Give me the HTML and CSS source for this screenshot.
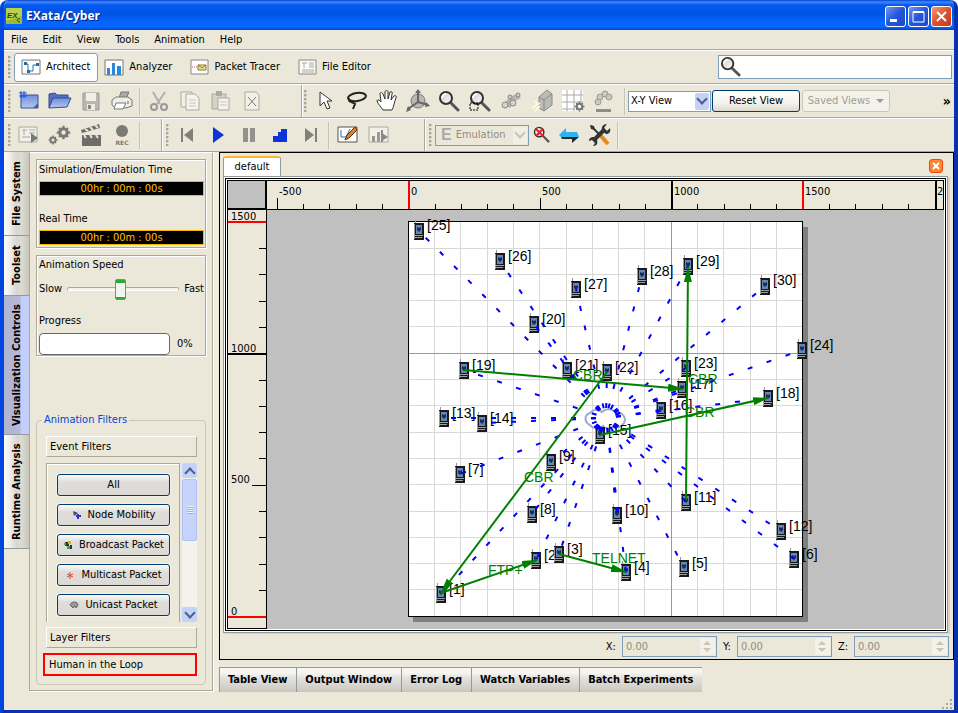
FILE: index.html
```html
<!DOCTYPE html>
<html lang="en">
<head>
<meta charset="utf-8">
<title>EXata/Cyber</title>
<link rel="stylesheet" href="styles.css">
</head>
<body>
<svg class="defs" width="0" height="0" aria-hidden="true">
  <defs>
    <linearGradient id="lens" x1="0" y1="0" x2="1" y2="1"><stop offset="0" stop-color="#c8c8c8"/><stop offset="1" stop-color="#fff"/></linearGradient>
    <linearGradient id="folder" x1="0" y1="0" x2="0" y2="1"><stop offset="0" stop-color="#6f8fd8"/><stop offset="1" stop-color="#b4c6f2"/></linearGradient>
    <symbol id="gear" viewBox="-10 -10 20 20"><circle r="5" fill="none" stroke="#7b7a75" stroke-width="4"/><path d="M0-9V-5M0 9V5M-9 0H-5M9 0H5M-6-6l3 3M6 6l-3-3M-6 6l3-3M6-6l-3 3" stroke="#7b7a75" stroke-width="3"/></symbol>
    <symbol id="magnifier" viewBox="0 0 22 22"><path d="M13 13l7 7" stroke="#555" stroke-width="3" stroke-linecap="round"/><circle cx="8" cy="8" r="6" fill="url(#lens)" stroke="#333" stroke-width="2"/><path d="M4 8c0-2 2-4 4-4" stroke="#fff" fill="none" stroke-width="2"/></symbol>
    <symbol id="phone" viewBox="0 0 10 20"><path d="M1 0h1v5H1z" fill="#999"/><path d="M0 3h10v17H0z" fill="#17191d"/><path d="M0 4h1v15H0z" fill="#9a9a9a"/><path d="M2 5h6v9H2z" fill="#6687b5"/><path d="M3 7l2 1 2-1v3l-2 2-2-2z" fill="#1c2c58"/><path d="M1 15h8v1H1zM1 17h7v1H1z" fill="#a0a09a"/></symbol>
    <marker id="arrow" viewBox="0 0 16 8" refX="15" refY="4" markerWidth="16" markerHeight="8" markerUnits="userSpaceOnUse" orient="auto"><path d="M0 0l16 4L0 8z" fill="#008000"/></marker>
  </defs>
</svg>
<div class="window">
  <header class="titlebar">
    <svg class="app-icon" width="16" height="16" viewBox="0 0 16 16"><path d="M0 0h16v16H0z" fill="#9dba32"/><path d="M0 0h16v8L0 13z" fill="#b9d04e"/><text x="1" y="10" class="app-mark">EX</text><path d="M14 11c-3-1-4 3 0 3" fill="none" stroke="#35401a"/></svg>
    <h1>EXata/Cyber</h1>
    <div class="window-buttons">
      <button class="wb" aria-label="Minimize"><svg width="19" height="19"><path d="M4 12h7v3H4z" fill="#fff"/></svg></button>
      <button class="wb" aria-label="Maximize"><svg width="19" height="19"><path d="M4 5h11v10H4z" fill="none" stroke="#fff"/><path d="M4 4h11v2H4z" fill="#fff"/></svg></button>
      <button class="wb wb-close" aria-label="Close"><svg width="19" height="19"><path d="M5 5l9 9M14 5l-9 9" stroke="#fff" stroke-width="2"/></svg></button>
    </div>
  </header>
  <nav class="menu"><button>File</button><button>Edit</button><button>View</button><button>Tools</button><button>Animation</button><button>Help</button></nav>

  <div class="bar modes">
    <span class="grip"></span>
    <button class="mode active"><svg width="21" height="17"><path d="M1 1h18v14H1z" fill="#fff" stroke="#777"/><path d="M4 5h3v7h5V6h5" fill="none" stroke="#2474b8"/><path d="M3 3h3v3H3zM6 11h3v3H6zM15 4h3v3h-3z" fill="#1f6cae"/></svg>Architect</button>
    <button class="mode"><svg width="21" height="17"><path d="M1 1h18v15H1z" fill="#fff" stroke="#777"/><path d="M3 9h3v7H3zM8 4h3v12H8zM13 7h4v9h-4z" fill="#2f86d6"/></svg>Analyzer</button>
    <button class="mode"><svg width="20" height="17"><path d="M1 1h17v14H1z" fill="#fff" stroke="#888"/><path d="M2 8h5" stroke="#c66" stroke-dasharray="1 1"/><path d="M8 6h8v5H8z" fill="#f0e48a" stroke="#887b2c"/><path d="M8 6l4 3 4-3" fill="none" stroke="#887b2c"/></svg>Packet Tracer</button>
    <button class="mode"><svg width="20" height="17"><path d="M1 1h17v14H1z" fill="#fafaf6" stroke="#888"/><path d="M4 4h5M6 4v5M11 4h5M11 6h5M11 8h5M4 11h12M4 13h12" stroke="#aaa" fill="none"/></svg>File Editor</button>
    <label class="search"><svg width="22" height="22"><use href="#magnifier" x="1" y="0" width="21" height="21"/></svg><input type="text" aria-label="Search"></label>
  </div>

  <div class="bar">
    <section class="group file-group">
      <span class="grip"></span>
      <button class="tool" aria-label="New"><svg width="22" height="22"><path d="M3 5h17v13H3z" fill="url(#folder)" stroke="#3c508c"/><path d="M15 18l5-5v5z" fill="#455da5"/><path d="M3 1v7M6 1v7M1 3h8M1 6h8" stroke="#1448ff"/></svg></button>
      <button class="tool" aria-label="Open"><svg width="24" height="22"><path d="M1 18V4l6-1 2 2h11v4" fill="#5170bd" stroke="#344c91"/><path d="M1 18l4-10h18l-4 9z" fill="url(#folder)" stroke="#344c91"/></svg></button>
      <button class="tool" aria-label="Save"><svg width="22" height="22"><path d="M3 3h16v17H3z" fill="#b9b8b0" stroke="#999"/><path d="M6 3h10v8H6z" fill="#f1f0e8"/><path d="M7 14h8v6H7z" fill="#ecebe1"/><path d="M8 15h3v4H8z" fill="#888"/></svg></button>
      <button class="tool" aria-label="Print"><svg width="22" height="22"><path d="M8 8l2-6h8l-3 7z" fill="#aaa" stroke="#777"/><path d="M1 10l4-3h12l4 3v6l-6 2H4l-3-3z" fill="#eeeeea" stroke="#777"/><path d="M5 13h10l-3 6H3z" fill="#fff" stroke="#777"/><path d="M17 11v3" stroke="#d33"/></svg></button>
      <span class="sep"></span>
      <button class="tool" disabled aria-label="Cut"><svg width="22" height="22"><path d="M5 2l7 12M17 2L9 14" stroke="#b3b1a7" stroke-width="2"/><circle cx="6" cy="17" r="3" fill="none" stroke="#999" stroke-width="2"/><circle cx="16" cy="17" r="3" fill="none" stroke="#999" stroke-width="2"/></svg></button>
      <button class="tool" disabled aria-label="Copy"><svg width="22" height="22"><path d="M2 2h11v15H2z" fill="#f2f1e8" stroke="#aaa99f"/><path d="M7 4h9l4 4v12H7z" fill="#f5f4ec" stroke="#aaa99f"/><path d="M10 10h7M10 13h7M10 16h7" stroke="#c6c5bc"/></svg></button>
      <button class="tool" disabled aria-label="Paste"><svg width="22" height="22"><path d="M2 4h14v15H2z" fill="#d5d3c6" stroke="#aaa99f"/><path d="M6 1h6v5H6z" fill="#aaa"/><path d="M8 8h11v12H8z" fill="#f5f4ec" stroke="#aaa99f"/><path d="M10 12h7M10 15h7" stroke="#c6c5bc"/></svg></button>
      <button class="tool" disabled aria-label="Delete"><svg width="22" height="22"><path d="M4 2h11l3 3v15H4z" fill="#f2f1e8" stroke="#aaa99f"/><path d="M7 7l8 9M15 7l-8 9" stroke="#777" stroke-width="1"/></svg></button>
    </section>
    <section class="group view-group">
      <span class="grip"></span>
      <button class="tool" aria-label="Select"><svg width="22" height="22"><path d="M6 2v14l4-4 3 7 3-1-3-7h5z" fill="#fff" stroke="#333"/></svg></button>
      <button class="tool" aria-label="Lasso"><svg width="22" height="22"><ellipse cx="12" cy="7" rx="9" ry="4" fill="none" stroke="#222" stroke-width="2" transform="rotate(-8 12 7)"/><path d="M5 9c-4 3 6 4 5 5l-2 5" fill="none" stroke="#222" stroke-width="2"/></svg></button>
      <button class="tool" aria-label="Pan"><svg width="22" height="22"><path d="M7 20C5 17 2 14 1 11c0-2 3-1 4 1L4 4c0-2 2-2 3 0l2 5V2c0-2 3-2 3 0v7l2-7c1-1 3 0 2 2l-1 6 3-4c1-1 3 0 2 2-2 4-2 9-4 12z" fill="#fff" stroke="#333"/></svg></button>
      <button class="tool" aria-label="Rotate 3D"><svg width="24" height="24"><circle cx="12" cy="12" r="7" fill="#b9b8b1" stroke="#777"/><path d="M12 13V2M12 13l10 3M12 13L2 20" stroke="#666" stroke-width="2" fill="none"/><path d="M9 4l3-4 3 4zM20 13l4 4-5 1zM5 21l-5 2 2-6z" fill="#666"/></svg></button>
      <button class="tool" aria-label="Zoom"><svg width="22" height="22"><use href="#magnifier" width="22" height="22"/></svg></button>
      <button class="tool" aria-label="Zoom area"><svg width="22" height="22"><use href="#magnifier" width="22" height="22"/><path d="M1 13h8v7H1z" fill="none" stroke="#000" stroke-dasharray="2 1"/></svg></button>
      <button class="tool" aria-label="Find"><svg width="22" height="22"><path d="M3 14l7-7 8-4 3 5-6 3-5 7z" fill="#b5b4ad"/><circle cx="5" cy="15" r="3" fill="#d5d4cc" stroke="#888"/><circle cx="13" cy="13" r="3" fill="#d5d4cc" stroke="#888"/><circle cx="10" cy="7" r="2" fill="#ccc" stroke="#888"/><circle cx="18" cy="5" r="2" fill="#ccc" stroke="#888"/></svg></button>
      <button class="tool" aria-label="Camera"><svg width="22" height="24"><path d="M8 8l8-7 5 4v11l-8 6-5-3z" fill="#bdbcb4" stroke="#888"/><path d="M8 8l5 3v11M13 11l8-6" fill="none" stroke="#888"/><path d="M1 19l8-5M3 12l5 3M4 22l5-5" stroke="#fff9dc" stroke-width="2"/></svg></button>
      <button class="tool" aria-label="Grid"><svg width="24" height="24"><path d="M1 1h21v21H1z" fill="#fff"/><path d="M6 1v21M13 1v21M20 1v12M1 6h21M1 13h21M1 20h13" stroke="#aaa"/><use href="#gear" x="13" y="12" width="11" height="11"/></svg></button>
      <button class="tool" aria-label="Smooth path"><svg width="22" height="24"><path d="M3 20h15v3H3z" fill="#8e8e88"/><g fill="#cac9c0" stroke="#999"><circle cx="5" cy="13" r="3"/><circle cx="7" cy="8" r="3"/><circle cx="12" cy="5" r="3"/><circle cx="16" cy="8" r="3"/></g></svg></button>
      <span class="sep"></span>
      <span class="combo view-combo"><select aria-label="View plane"><option>X-Y View</option></select><i class="chev"></i></span>
      <button class="push reset">Reset View</button>
      <button class="push saved" disabled>Saved Views<i class="tri"></i></button>
      <button class="more" aria-label="More">»</button>
    </section>
  </div>

  <div class="bar">
    <section class="group run-group">
      <span class="grip"></span>
      <button class="tool" aria-label="Script"><svg width="22" height="20"><path d="M1 2h18v15H1z" fill="#f2f1e8" stroke="#aaa99f"/><path d="M4 5h5M6 5v5M11 5h6M11 8h6M4 12h8" stroke="#aaa" fill="none"/><path d="M13 8l7 5-7 5z" fill="#777"/></svg></button>
      <button class="tool" aria-label="Settings"><svg width="24" height="22"><use href="#gear" x="8" y="1" width="15" height="15"/><use href="#gear" x="0" y="11" width="10" height="10"/></svg></button>
      <button class="tool" aria-label="Movie"><svg width="22" height="24"><path d="M2 12h19v11H2z" fill="#6e6d69"/><path d="M1 7l18-6 1 4L2 10z" fill="#6e6d69"/><path d="M5 6l3 2M10 4l3 3M15 2l3 3M4 12l2 3M10 12l2 3M16 12l2 3" stroke="#e8e6da" stroke-width="2"/></svg></button>
      <button class="tool" aria-label="Record"><svg width="22" height="24"><circle cx="11" cy="8" r="6" fill="#7b7a75"/><text x="11" y="22" text-anchor="middle" class="rec">REC</text></svg></button>
      <span class="sep"></span>
    </section>
    <section class="group play-group">
      <span class="grip"></span>
      <button class="tool" aria-label="First"><svg width="22" height="20"><path d="M5 3h2v14H5zM17 3v14L8 10z" fill="#807f7a"/></svg></button>
      <button class="tool" aria-label="Play"><svg width="22" height="20"><path d="M6 2l11 8-11 8z" fill="#0b35d8"/></svg></button>
      <button class="tool" aria-label="Pause"><svg width="22" height="20"><path d="M5 3h5v14H5zM12 3h5v14h-5z" fill="#92918b"/></svg></button>
      <button class="tool" aria-label="Step"><svg width="22" height="20"><path d="M4 17v-6h5V7h3V4h6v13z" fill="#0b35d8"/></svg></button>
      <button class="tool" aria-label="Last"><svg width="22" height="20"><path d="M5 3l9 7-9 7zM15 3h2v14h-2z" fill="#807f7a"/></svg></button>
      <span class="sep"></span>
      <button class="tool" aria-label="Edit scenario"><svg width="22" height="20"><path d="M1 2h19v15H1z" fill="#fff" stroke="#555"/><path d="M4 5v7h5l4-8" stroke="#2474b8" fill="none"/><path d="M8 15l2-5 8-8 2 3-8 8z" fill="#e08020" stroke="#553311"/></svg></button>
      <button class="tool" aria-label="Run analysis"><svg width="22" height="20"><path d="M1 2h19v15H1z" fill="#f2f1e8" stroke="#aaa99f"/><path d="M4 11h3v6H4zM9 7h3v10H9z" fill="#999"/><path d="M13 5h2v12h-2zM14 8l6 4-6 4z" fill="#888"/></svg></button>
    </section>
    <section class="group emu-group">
      <span class="grip"></span>
      <span class="combo emu-combo off"><b>E</b><select disabled aria-label="Mode"><option>Emulation</option></select><i class="chev"></i></span>
      <button class="tool slim" aria-label="Clear zoom"><svg width="18" height="20"><use href="#magnifier" x="1" y="1" width="17" height="17"/><path d="M4 4l7 7M11 4l-7 7" stroke="#e0202a" stroke-width="2"/></svg></button>
      <button class="tool" aria-label="Connect"><svg width="22" height="20"><path d="M3 12h18l-7 6v-4H4z" fill="#222b33"/><path d="M1 10l7-7v4h11l2 5H3z" fill="#2cb4ec"/></svg></button>
      <button class="tool" aria-label="Tools"><svg width="24" height="24"><path d="M3 3l10 10" stroke="#333" stroke-width="2"/><path d="M2 2l4 1 1 4-4-1z" fill="#333"/><path d="M13 13l7 8" stroke="#e58a1c" stroke-width="4"/><path d="M6 17L17 6" stroke="#333" stroke-width="4"/><path d="M22 5l-3 3-3-3 3-4c-4 0-6 3-5 7l4 3c3 0 5-2 4-6zM1 18l3-1 3 3-2 3c4 0 5-3 4-6l-3-3c-3 0-5 1-5 4z" fill="#333"/></svg></button>
      <span class="sep"></span>
    </section>
  </div>

  <main class="main">
    <nav class="side-tabs"><button class="t1">File System</button><button class="t2">Toolset</button><button class="t3 on">Visualization Controls</button><button class="t4">Runtime Analysis</button></nav>
    <aside class="panel">
      <section class="box times">
        <span>Simulation/Emulation Time</span><output>00hr : 00m : 00s</output>
        <span>Real Time</span><output>00hr : 00m : 00s</output>
      </section>
      <section class="box speed">
        <label for="speed">Animation Speed</label>
        <div class="slider"><span>Slow</span><input id="speed" type="range" min="0" max="100" value="47"><span>Fast</span></div>
        <label for="prog">Progress</label>
        <div class="progress"><progress id="prog" max="100" value="0"></progress><span>0%</span></div>
      </section>
      <fieldset class="filters">
        <legend>Animation Filters</legend>
        <button class="fold">Event Filters</button>
        <div class="events">
          <div class="event-list">
            <button class="push">All</button>
            <button class="push"><svg width="10" height="10"><path d="M1 1l5 2-4 3z" fill="#447"/><path d="M6 4v5M4 6h5" stroke="#33b" stroke-width="2"/></svg>Node Mobility</button>
            <button class="push"><svg width="10" height="10"><path d="M2 2h4v4H2z" fill="#333"/><path d="M5 1h3v3H5z" fill="#e0b020"/><path d="M4 6h3v3H4z" fill="#3a4"/><path d="M1 3h2v2H1z" fill="#5a5"/><path d="M7 5h2v4H7z" fill="#235"/></svg>Broadcast Packet</button>
            <button class="push"><svg width="10" height="10"><path d="M5 2v7M2 4l6 3M8 4L2 7" stroke="#cf4a32"/></svg>Multicast Packet</button>
            <button class="push"><svg width="10" height="10"><path d="M1 5c1-4 8-4 8 0L7 8 6 6 4 8z" fill="#999" stroke="#666"/></svg>Unicast Packet</button>
          </div>
          <div class="scroll"><button aria-label="Scroll up"><i class="chev up"></i></button><span class="thumb"></span><button aria-label="Scroll down"><i class="chev"></i></button></div>
        </div>
        <button class="fold">Layer Filters</button>
        <button class="fold marked">Human in the Loop</button>
      </fieldset>
    </aside>

    <div class="work">
      <section class="editor">
        <div class="doc-tabs"><button class="doc">default</button><button class="doc-close" aria-label="Close tab"><svg width="12" height="12"><path d="M3 3l6 6M9 3l-6 6" stroke="#fff" stroke-width="2"/></svg></button></div>
        <div class="frame"><div class="map">
          <div class="corner"></div>
          <svg class="ruler-x"><g transform="translate(-267 -181)">
            <path class="tick" d="M277 198v12M303 204v6M329 204v6M356 204v6M382 204v6M435 204v6M461 204v6M487 204v6M513 204v6M540 198v12M566 204v6M592 204v6M619 204v6M645 204v6M697 204v6M724 204v6M750 204v6M776 204v6M829 204v6M855 204v6M882 204v6M908 204v6"/>
            <path class="major" d="M672 181v29M936 181v29"/><path class="limit" d="M409 181v29M803 181v29"/>
            <text x="279" y="195">-500</text><text x="411" y="195">0</text><text x="542" y="195">500</text><text x="674" y="195">1000</text><text x="805" y="195">1500</text><text x="937" y="195">2</text>
          </g></svg>
          <svg class="ruler-y"><g transform="translate(-228 -210)">
            <path class="tick" d="M259 248h7M259 274h7M259 301h7M259 327h7M259 380h7M259 406h7M259 432h7M259 458h7M252 485h14M259 511h7M259 537h7M259 564h7M259 590h7"/>
            <path class="major" d="M228 354h38"/><path class="limit" d="M228 222h38M228 617h38"/>
            <text x="231" y="220">1500</text><text x="231" y="352">1000</text><text x="231" y="483">500</text><text x="231" y="615">0</text>
          </g></svg>
          <svg class="canvas" role="img" aria-label="Network scenario"><g transform="translate(-267 -210)">
            <path d="M413 227h395v395H413z" fill="#808080"/><path d="M408 221h395v396H408z" fill="#000"/><path d="M409 222h393v394H409z" fill="#fff"/>
            <path class="grid" d="M434 222v394M460 222v394M487 222v394M513 222v394M539 222v394M566 222v394M592 222v394M618 222v394M644 222v394M697 222v394M723 222v394M750 222v394M776 222v394M409 248h393M409 274h393M409 300h393M409 326h393M409 379h393M409 405h393M409 432h393M409 458h393M409 484h393M409 511h393M409 537h393M409 563h393M409 589h393"/>
            <path class="grid-major" d="M671 222v394M409 353h393"/>
            <path class="cloud" d="M590 425c-6-3-6-10 0-12 3-4 9-4 12-1 4-4 11-3 13 0 7-1 12 6 9 11-2 4-7 5-10 3-3 4-9 3-11 0-4 3-10 3-13-1z"/>
            <g class="nodes">
              <g transform="translate(419 232)"><use href="#phone" x="-5" y="-12" width="10" height="20"/><text x="8" y="-2">[25]</text></g>
              <g transform="translate(500 262)"><use href="#phone" x="-5" y="-12" width="10" height="20"/><text x="8" y="-1">[26]</text></g>
              <g transform="translate(576 290)"><use href="#phone" x="-5" y="-12" width="10" height="20"/><text x="8" y="-1">[27]</text></g>
              <g transform="translate(642 277)"><use href="#phone" x="-5" y="-12" width="10" height="20"/><text x="8" y="-1">[28]</text></g>
              <g transform="translate(688 267)"><use href="#phone" x="-5" y="-12" width="10" height="20"/><text x="8" y="-1">[29]</text></g>
              <g transform="translate(765 287)"><use href="#phone" x="-5" y="-12" width="10" height="20"/><text x="8" y="-2">[30]</text></g>
              <g transform="translate(534 325)"><use href="#phone" x="-5" y="-12" width="10" height="20"/><text x="8" y="-1">[20]</text></g>
              <g transform="translate(802 351)"><use href="#phone" x="-5" y="-12" width="10" height="20"/><text x="8" y="-1">[24]</text></g>
              <g transform="translate(464 371)"><use href="#phone" x="-5" y="-12" width="10" height="20"/><text x="8" y="-1">[19]</text></g>
              <g transform="translate(567 371)"><use href="#phone" x="-5" y="-12" width="10" height="20"/><text x="8" y="-1">[21]</text></g>
              <g transform="translate(607 373)"><use href="#phone" x="-5" y="-12" width="10" height="20"/><text x="8" y="-1">[22]</text></g>
              <g transform="translate(686 369)"><use href="#phone" x="-5" y="-12" width="10" height="20"/><text x="8" y="-1">[23]</text></g>
              <g transform="translate(682 390)"><use href="#phone" x="-5" y="-12" width="10" height="20"/><text x="8" y="-1">[17]</text></g>
              <g transform="translate(768 399)"><use href="#phone" x="-5" y="-12" width="10" height="20"/><text x="8" y="-1">[18]</text></g>
              <g transform="translate(661 411)"><use href="#phone" x="-5" y="-12" width="10" height="20"/><text x="8" y="-1">[16]</text></g>
              <g transform="translate(444 419)"><use href="#phone" x="-5" y="-12" width="10" height="20"/><text x="8" y="-1">[13]</text></g>
              <g transform="translate(482 424)"><use href="#phone" x="-5" y="-12" width="10" height="20"/><text x="8" y="-1">[14]</text></g>
              <g transform="translate(600 436)"><use href="#phone" x="-5" y="-12" width="10" height="20"/><text x="8" y="-1">[15]</text></g>
              <g transform="translate(460 475)"><use href="#phone" x="-5" y="-12" width="10" height="20"/><text x="8" y="-1">[7]</text></g>
              <g transform="translate(551 463)"><use href="#phone" x="-5" y="-12" width="10" height="20"/><text x="8" y="-2">[9]</text></g>
              <g transform="translate(686 503)"><use href="#phone" x="-5" y="-12" width="10" height="20"/><text x="8" y="-1">[11]</text></g>
              <g transform="translate(532 515)"><use href="#phone" x="-5" y="-12" width="10" height="20"/><text x="8" y="-1">[8]</text></g>
              <g transform="translate(617 516)"><use href="#phone" x="-5" y="-12" width="10" height="20"/><text x="8" y="-1">[10]</text></g>
              <g transform="translate(781 532)"><use href="#phone" x="-5" y="-12" width="10" height="20"/><text x="8" y="-1">[12]</text></g>
              <g transform="translate(536 561)"><use href="#phone" x="-5" y="-12" width="10" height="20"/><text x="8" y="-1">[2]</text></g>
              <g transform="translate(559 555)"><use href="#phone" x="-5" y="-12" width="10" height="20"/><text x="8" y="-1">[3]</text></g>
              <g transform="translate(626 573)"><use href="#phone" x="-5" y="-12" width="10" height="20"/><text x="8" y="-1">[4]</text></g>
              <g transform="translate(684 569)"><use href="#phone" x="-5" y="-12" width="10" height="20"/><text x="8" y="-1">[5]</text></g>
              <g transform="translate(794 560)"><use href="#phone" x="-5" y="-12" width="10" height="20"/><text x="8" y="-1">[6]</text></g>
              <g transform="translate(441 595)"><use href="#phone" x="-5" y="-12" width="10" height="20"/><text x="8" y="-1">[1]</text></g>
            </g>
            <g class="links">
              <path d="M606 418L419 231"/><path d="M606 418L500 261"/><path d="M606 418L576 289"/><path d="M606 418L642 276"/><path d="M606 418L688 266"/><path d="M606 418L765 286"/><path d="M606 418L534 324"/><path d="M606 418L802 350"/><path d="M606 418L464 370"/><path d="M606 418L567 370"/><path d="M606 418L607 372"/><path d="M606 418L686 368"/><path d="M606 418L682 389"/><path d="M606 418L768 398"/><path d="M606 418L661 410"/><path d="M606 418L444 418"/><path d="M606 418L482 423"/><path d="M606 418L600 435"/><path d="M606 418L460 474"/><path d="M606 418L551 462"/><path d="M606 418L686 502"/><path d="M606 418L532 514"/><path d="M606 418L617 515"/><path d="M606 418L781 531"/><path d="M606 418L536 560"/><path d="M606 418L559 554"/><path d="M606 418L626 572"/><path d="M606 418L684 568"/><path d="M606 418L794 559"/><path d="M606 418L441 594"/>
            </g>
            <g class="flows">
              <path d="M441 593L537 560"/><path d="M607 372L441 593"/><path d="M464 370L683 389"/><path d="M600 435L768 398"/><path d="M686 500L688 267"/><path d="M559 554L626 572"/>
              <text x="573" y="380">CBR</text><text x="688" y="384">CBR</text><text x="685" y="417">CBR</text><text x="524" y="482">CBR</text><text x="488" y="575">FTP+</text><text x="592" y="563">TELNET</text>
            </g>
          </g></svg>
        </div></div>
        <div class="coords">
          <label for="cx">X:</label><span class="spin"><input id="cx" type="text" value="0.00" disabled><i class="steps"></i></span>
          <label for="cy">Y:</label><span class="spin"><input id="cy" type="text" value="0.00" disabled><i class="steps"></i></span>
          <label for="cz">Z:</label><span class="spin"><input id="cz" type="text" value="0.00" disabled><i class="steps"></i></span>
        </div>
      </section>
      <nav class="bottom-tabs"><button>Table View</button><button>Output Window</button><button>Error Log</button><button>Watch Variables</button><button>Batch Experiments</button></nav>
      <svg class="sizer" width="12" height="12"><path d="M9 1h2v2H9zM5 5h2v2H5zM9 5h2v2H9zM1 9h2v2H1zM5 9h2v2H5zM9 9h2v2H9z" fill="#aca899"/></svg>
    </div>
  </main>
</div>
</body>
</html>
```
FILE: styles.css
```css
* { box-sizing: border-box; }
html, body { margin: 0; height: 100%; }
body { background: #fff; color: #000; font: 11px/14px "DejaVu Sans Condensed", "DejaVu Sans", sans-serif; }
button, input, select { font: inherit; color: inherit; margin: 0; padding: 0; border: 0; background: none; border-radius: 0; white-space: nowrap; }
svg { display: block; flex: none; }
.defs { position: absolute; }

.window { min-height: 100vh; display: flex; flex-direction: column; background: #ebe8d9; border: solid #0045e0; border-width: 0 4px 4px; border-right-color: #0831b0; border-bottom-color: #0831b0; border-radius: 8px 8px 0 0; overflow: hidden; }
.titlebar { height: 30px; display: flex; align-items: center; gap: 4px; margin: 0 -4px; padding: 2px 6px 0; background: linear-gradient(#0a3fcf 0, #3a8bff 2px, #0558ee 5px, #0054e3 14px, #0566ff 22px, #0566ff 27px, #0040c8 30px); }
.titlebar h1 { margin: 0; color: #fff; font: bold 12px/18px "Open Sans", sans-serif; text-shadow: 1px 1px 1px #0a1883; }
.app-mark { font: italic bold 8px "Liberation Sans", sans-serif; fill: #35401a; }
.window-buttons { margin-left: auto; display: flex; gap: 2px; }
.wb { width: 21px; height: 21px; border: 1px solid #fff; border-radius: 3px; background: linear-gradient(135deg, #7295ec, #2456dc 50%, #1c49c8); }
.wb-close { background: linear-gradient(135deg, #f09a80, #e0502c 50%, #c43a14); }

.menu { height: 20px; display: flex; align-items: center; gap: 15px; padding: 0 7px; border-bottom: 1px solid #aca899; }
.bar { height: 34px; display: flex; border-top: 1px solid #fff; border-bottom: 1px solid #aca899; }
.modes { align-items: center; }
.group { display: flex; align-items: center; }
.group + .group { border-left: 1px solid #aca899; box-shadow: inset 1px 0 #fff; }
.grip { flex: none; width: 3px; height: 22px; margin: 0 2px 0 4px; background: radial-gradient(circle at 1px 1px, #a9a697 1px, transparent 2px) 0 0 / 3px 4px; }
.sep { width: 2px; height: 27px; margin: 0 2px; border-left: 1px solid #c5c2b0; background: #f3f1e6; }
.tool { width: 31px; height: 28px; display: grid; place-items: center; flex: none; }
.slim { width: 24px; }
.mode { height: 29px; display: flex; align-items: center; gap: 4px; margin-left: 1px; padding: 0 12px 0 5px; }
.mode.active { padding: 0 7px 0 6px; background: #fff; border: 1px solid #7f9db9; border-radius: 3px; }
.search { margin-left: auto; margin-right: 2px; width: 234px; height: 24px; display: flex; background: #fff; border: 1px solid #7f9db9; }
.search input { flex: 1; min-width: 0; }
.file-group { flex: 0 0 297px; }
.view-group { flex: 1; }
.view-group .grip { margin-left: 2px; }
.view-group .sep { margin-left: 5px; }
.run-group { flex: 0 0 157px; }
.play-group { flex: 0 0 263px; }

.combo { display: flex; align-items: center; height: 21px; padding: 1px; background: #fff; border: 1px solid #7f9db9; }
.combo select { flex: 1; min-width: 0; appearance: none; }
.combo select:disabled { color: #8f8d80; opacity: 1; }
.combo .chev { width: 14px; height: 17px; }
.combo b { color: #aaa; font: bold 16px/16px "Liberation Sans", sans-serif; margin: 0 4px; }
.view-combo { width: 83px; }
.view-combo select { margin-left: 1px; }
.emu-combo { width: 94px; margin-left: 1px; background: #ebe8d9; }
.chev { display: grid; place-items: center; flex: none; background: #c3d1fb; border-radius: 2px; }
.chev::after { content: ""; width: 6px; height: 6px; border: solid #4d6185; border-width: 0 2px 2px 0; transform: translateY(-2px) rotate(45deg); }
.chev.up::after { transform: translateY(2px) rotate(225deg); }
.off .chev { background: #f2f0e6; }
.off .chev::after { border-color: #c8c5b5; }
.push { height: 22px; display: flex; align-items: center; justify-content: center; gap: 6px; border: 1px solid #003c74; border-radius: 3px; background: linear-gradient(#fff, #f4f3ec 60%, #dcd9cd); }
.reset { width: 88px; margin-left: 1px; }
.saved { width: 88px; margin-left: 2px; border-color: #c9c7ba; background: #f3f2ea; color: #a09e90; }
.tri { border: 4px solid transparent; border-top-color: #a09e90; border-bottom: 0; }
.more { margin-left: auto; margin-right: 3px; font-weight: bold; font-size: 14px; }
.rec { font: bold 6px "DejaVu Sans", sans-serif; fill: #7b7a75; }

.main { flex: 1; display: flex; min-height: 0; }
.side-tabs { width: 25px; display: flex; flex-direction: column; }
.side-tabs button { width: 25px; writing-mode: vertical-rl; transform: rotate(180deg); font-weight: bold; border-top: 1px solid #919b9c; background: linear-gradient(90deg, #c9c7ba, #dddbd0 30%, #d9d6d6 50%, #f2f1ec 80%, #fbfbf7); }
.t1 { height: 84px; } .t2 { height: 60px; } .t3 { height: 139px; } .t4 { height: 114px; }
.side-tabs .on { background: linear-gradient(90deg, #c3cffa 30%, #b5b9dc 35%, #b0b4cf); }

.panel { flex: none; width: 184px; margin-bottom: 19px; padding: 6px 6px 5px; display: flex; flex-direction: column; border: 1px solid #aca899; border-top-color: #fff; box-shadow: 1px 0 #fff, 1px 1px #fff, 5px 0 #f0eee3; }
.box { display: flex; flex-direction: column; border: 1px solid #aca899; box-shadow: 1px 1px #fff, inset 1px 1px #fff; padding: 2px 1px 2px 2px; }
.times { height: 89px; padding-top: 3px; }
.times output { height: 15px; line-height: 13px; border: 1px solid #f5b800; background: #000; color: #ffc000; text-align: center; margin: 4px 0 16px; }
.times output:last-child { margin-bottom: 0; }
.speed { height: 101px; margin-top: 7px; }
.slider { display: flex; align-items: center; height: 24px; margin: 6px 0 14px; gap: 5px; }
.slider input { flex: 1; min-width: 0; height: 22px; appearance: none; }
.slider input::-webkit-slider-runnable-track { height: 4px; border: 1px solid #aaa99e; border-bottom-color: #fff; border-radius: 2px; background: #f4f3ea; }
.slider input::-webkit-slider-thumb { appearance: none; width: 11px; height: 21px; margin-top: -9px; border: 1px solid #778899; border-radius: 2px; background: linear-gradient(#21b12a 3px, #f3f3ef 3px 17px, #21b12a 17px); }
.progress { display: flex; align-items: center; gap: 7px; margin-top: 5px; }
.progress progress { appearance: none; width: 131px; height: 22px; border: 1px solid #686868; border-radius: 4px; background: #fff; }
.progress progress::-webkit-progress-bar { background: transparent; }
.progress progress::-webkit-progress-value { background: #21b12a; }

.filters { margin: 57px 0 0; padding: 9px 8px 8px 9px; min-width: 0; border: 1px solid #c9c6b5; border-radius: 4px; display: flex; flex-direction: column; }
.filters legend { margin-left: -4px; padding: 0 2px; color: #0046d5; }
.fold { height: 21px; padding: 0 3px; text-align: left; border: 1px solid; border-color: #fff #aca899 #aca899 #fff; }
.marked { height: 23px; margin: 5px 0 0 -3px; padding: 0 4px; border: 2px solid #f00; }
.events { display: flex; height: 159px; margin: 6px 0 5px; gap: 2px; overflow: hidden; }
.event-list { flex: 1; display: flex; flex-direction: column; gap: 8px; padding: 10px 9px 0 10px; border: 1px solid #aca899; border-bottom: 0; box-shadow: inset 1px 1px #fff; }
.event-list .push { flex: none; background: linear-gradient(#fbfbf8, #deddd9 35%, #dbdad6); box-shadow: 0 0 0 1px #f3f2ea; }
.scroll { width: 15px; display: flex; flex-direction: column; background: #f3f2ee; }
.scroll .chev, .scroll button { width: 15px; height: 15px; border-radius: 2px; }
.thumb { height: 62px; margin: 1px 0 auto; border: 1px solid #b0c2f6; border-radius: 2px; background: repeating-linear-gradient(#eef4fe 0 1px, #8cb0f8 1px 2px) center / 6px 8px no-repeat #c6d3fb; }

.work { flex: 1; min-width: 0; position: relative; display: flex; flex-direction: column; padding-left: 6px; }
.editor { flex: 1; min-height: 0; display: flex; flex-direction: column; border: 1px solid #000; }
.doc-tabs { height: 23px; display: flex; justify-content: space-between; align-items: flex-end; padding: 0 10px 0 3px; }
.doc { height: 20px; width: 58px; border: 1px solid #919b9c; border-width: 2px 1px 0; border-top-color: #ffb62c; border-radius: 3px 3px 0 0; background: #fff; }
.doc-close { width: 14px; height: 14px; margin-bottom: 3px; border: 1px solid #f14b14; border-radius: 3px; background: #ff8434; }
.frame { flex: 1; min-height: 0; display: flex; margin: 0 5px 3px 3px; border: 1px solid #919b9c; padding: 1px; background: #fff; box-shadow: 2px 1px #d8d5c8; }
.map { flex: 1; min-width: 0; display: grid; grid-template: 30px 1fr / 40px 1fr; border: 1px solid #000; padding: 1px; }
.map > * { width: 100%; height: 100%; min-width: 0; min-height: 0; overflow: hidden; }
.corner { background: #c0c0c0; border: solid #000; border-width: 1px 2px 2px 1px; }
.ruler-x { border: solid #000; border-width: 1px 1px 1px 0; background: #ebe8d9; }
.ruler-y { border: solid #000; border-width: 0 1px 1px; background: #ebe8d9; }
.canvas { background: #c0c0c0; }
.map path { shape-rendering: crispEdges; }
.tick { stroke: #000; }
.major { stroke: #000; stroke-width: 2px; }
.limit { stroke: #f00; stroke-width: 2px; }
.map .grid { stroke: #d8d8d4; }
.grid-major { stroke: #999; }
.map .cloud { fill: #fff; stroke: #9fa9cc; stroke-width: 2px; shape-rendering: auto; }
.nodes text, .flows text { font: 14px "Liberation Sans", sans-serif; }
.links path { stroke: #00f; stroke-width: 2px; stroke-dasharray: 5 15; stroke-dashoffset: -10; shape-rendering: auto; }
.flows path { stroke: #008000; stroke-width: 2px; marker-end: url(#arrow); shape-rendering: auto; }
.flows text { fill: #008000; }

.coords { height: 23px; display: flex; align-items: flex-start; justify-content: flex-end; padding-right: 4px; }
.coords label { line-height: 21px; margin: 0 6px; }
.spin { width: 95px; height: 21px; display: flex; border: 1px solid #7f9db9; padding: 1px; }
.spin input { flex: 1; min-width: 0; padding-left: 2px; color: #8f8d80; }
.steps { width: 15px; display: flex; flex-direction: column; justify-content: center; align-items: center; gap: 3px; background: #f3f1e8; }
.steps::before, .steps::after { content: ""; border: 4px solid transparent; border-top: 0; border-bottom-color: #c8c5b5; }
.steps::after { border-top: 4px solid #c8c5b5; border-bottom: 0; }
.bottom-tabs { display: flex; margin: 7px 0 18px; }
.bottom-tabs button { height: 25px; padding: 0 9px 0 8px; font-weight: bold; border: 1px solid #919b9c; border-width: 1px 0 0 1px; background: linear-gradient(#f6f5f0 20%, #e3e1da 40%, #dcd9d9 60%, #c9c7ba); }
.sizer { position: absolute; right: 1px; bottom: 0; }
```
